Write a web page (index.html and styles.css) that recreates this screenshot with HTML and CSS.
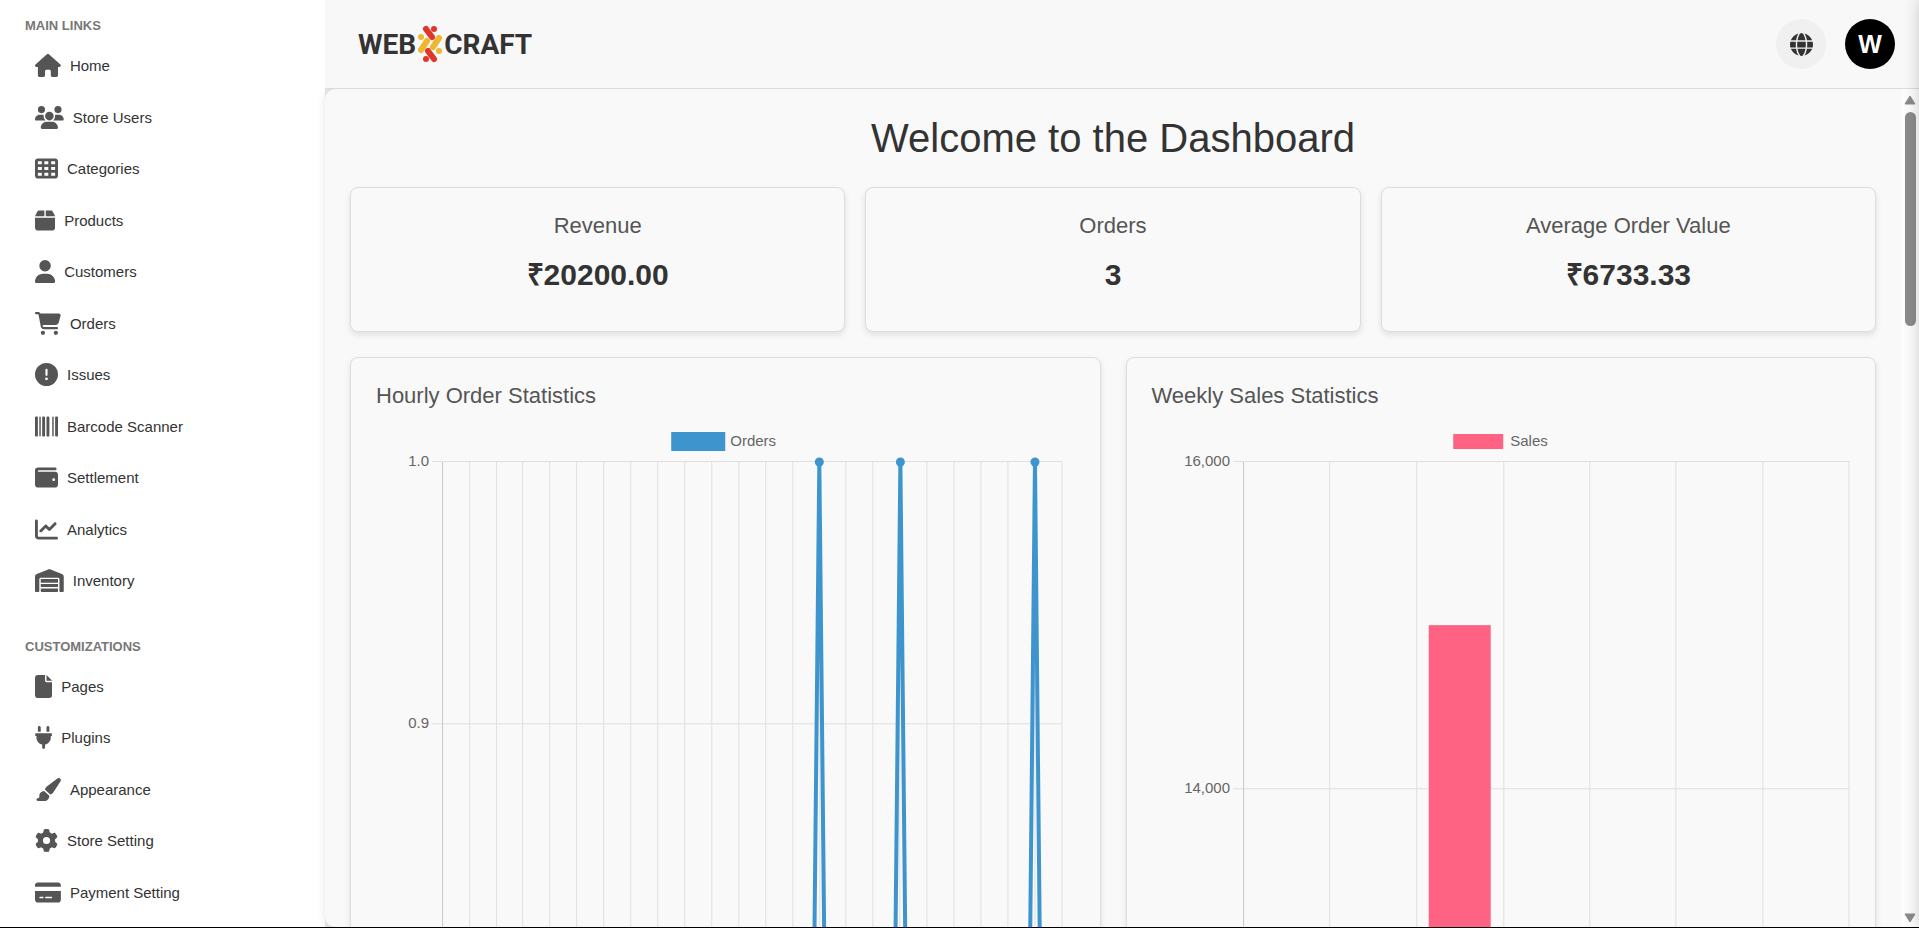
FILE: index.html
```html
<!DOCTYPE html>
<html lang="en">
<head>
<meta charset="utf-8">
<title>WebXCraft Dashboard</title>
<link rel="stylesheet" href="styles.css">
</head>
<body>
<div class="app">
  <aside class="sidebar">
    <nav class="nav-section" aria-labelledby="main-links">
      <h2 class="nav-heading" id="main-links">MAIN LINKS</h2>
      <ul class="nav-list">
        <li><a class="nav-link" href="#"><svg class="icon" viewBox="0 0 576 512"><path d="M575.8 255.5c0 18-15 32.1-32 32.1h-32l.7 160.2c0 2.7-.2 5.4-.5 8.1V472c0 22.1-17.9 40-40 40H456c-1.1 0-2.2 0-3.3-.1c-1.4 .1-2.8 .1-4.2 .1H416 392c-22.1 0-40-17.9-40-40V448 384c0-17.7-14.3-32-32-32H256c-17.7 0-32 14.3-32 32v64 24c0 22.1-17.9 40-40 40H160 128.1c-1.5 0-3-.1-4.5-.2c-1.2 .1-2.4 .2-3.6 .2H104c-22.1 0-40-17.9-40-40V360c0-.9 0-1.9 .1-2.8V287.6H32c-18 0-32-14-32-32.1c0-9 3-17 10-24L266.4 8c7-7 15-8 22-8s15 2 21 7L564.8 231.5c8 7 12 15 11 24z"/></svg>Home</a></li>
        <li><a class="nav-link" href="#"><svg class="icon" viewBox="0 0 640 512"><path d="M144 0a80 80 0 1 1 0 160A80 80 0 1 1 144 0zM512 0a80 80 0 1 1 0 160A80 80 0 1 1 512 0zM0 298.7C0 239.8 47.8 192 106.7 192h42.7c15.9 0 31 3.5 44.6 9.7c-1.3 7.2-1.9 14.7-1.9 22.3c0 38.2 16.8 72.5 43.3 96c-.2 0-.4 0-.7 0H21.3C9.6 320 0 310.4 0 298.7zM405.3 320c-.2 0-.4 0-.7 0c26.6-23.5 43.3-57.8 43.3-96c0-7.6-.7-15-1.9-22.3c13.6-6.3 28.7-9.7 44.6-9.7h42.7C592.2 192 640 239.8 640 298.7c0 11.8-9.6 21.3-21.3 21.3H405.3zM224 224a96 96 0 1 1 192 0 96 96 0 1 1 -192 0zM128 485.3C128 411.7 187.7 352 261.3 352H378.7C452.3 352 512 411.7 512 485.3c0 14.7-11.9 26.7-26.7 26.7H154.7c-14.7 0-26.7-11.9-26.7-26.7z"/></svg>Store Users</a></li>
        <li><a class="nav-link" href="#"><svg class="icon" viewBox="0 0 512 512"><path d="M64 32C28.7 32 0 60.7 0 96V416c0 35.3 28.7 64 64 64H448c35.3 0 64-28.7 64-64V96c0-35.3-28.7-64-64-64H64zm88 64v64H64V96h88zm56 0h88v64H208V96zm240 0v64H360V96h88zM64 224h88v64H64V224zm232 0v64H208V224h88zm64 0h88v64H360V224zM152 352v64H64V352h88zm56 0h88v64H208V352zm240 0v64H360V352h88z"/></svg>Categories</a></li>
        <li><a class="nav-link" href="#"><svg class="icon" viewBox="0 0 448 512"><path d="M50.7 58.5L0 160H208V32H93.7C75.5 32 58.9 42.3 50.7 58.5zM240 160H448L397.3 58.5C389.1 42.3 372.5 32 354.3 32H240V160zm208 32H0V416c0 35.3 28.7 64 64 64H384c35.3 0 64-28.7 64-64V192z"/></svg>Products</a></li>
        <li><a class="nav-link" href="#"><svg class="icon" viewBox="0 0 448 512"><path d="M224 256A128 128 0 1 0 224 0a128 128 0 1 0 0 256zm-45.7 48C79.8 304 0 383.8 0 482.3C0 498.7 13.3 512 29.7 512H418.3c16.4 0 29.7-13.3 29.7-29.7C448 383.8 368.2 304 269.7 304H178.3z"/></svg>Customers</a></li>
        <li><a class="nav-link" href="#"><svg class="icon" viewBox="0 0 576 512"><path d="M0 24C0 10.7 10.7 0 24 0H69.5c22 0 41.5 12.8 50.6 32h411c26.3 0 45.5 25 38.6 50.4l-41 152.3c-8.5 31.4-37 53.3-69.5 53.3H170.7l5.4 28.5c2.2 11.3 12.1 19.5 23.6 19.5H488c13.3 0 24 10.7 24 24s-10.7 24-24 24H199.7c-34.6 0-64.3-24.6-70.7-58.5L77.4 54.5c-.7-3.8-4-6.5-7.9-6.5H24C10.7 48 0 37.3 0 24zM128 464a48 48 0 1 1 96 0 48 48 0 1 1 -96 0zm336-48a48 48 0 1 1 0 96 48 48 0 1 1 0-96z"/></svg>Orders</a></li>
        <li><a class="nav-link" href="#"><svg class="icon" viewBox="0 0 512 512"><path d="M256 512A256 256 0 1 0 256 0a256 256 0 1 0 0 512zm0-384c13.3 0 24 10.7 24 24V264c0 13.3-10.7 24-24 24s-24-10.7-24-24V152c0-13.3 10.7-24 24-24zM224 352a32 32 0 1 1 64 0 32 32 0 1 1 -64 0z"/></svg>Issues</a></li>
        <li><a class="nav-link" href="#"><svg class="icon" viewBox="0 0 512 512"><path d="M24 32C10.7 32 0 42.7 0 56V456c0 13.3 10.7 24 24 24H40c13.3 0 24-10.7 24-24V56c0-13.3-10.7-24-24-24H24zm88 0c-8.8 0-16 7.2-16 16V464c0 8.8 7.2 16 16 16s16-7.2 16-16V48c0-8.8-7.2-16-16-16zm72 0c-13.3 0-24 10.7-24 24V456c0 13.3 10.7 24 24 24h16c13.3 0 24-10.7 24-24V56c0-13.3-10.7-24-24-24H184zm96 0c-13.3 0-24 10.7-24 24V456c0 13.3 10.7 24 24 24h16c13.3 0 24-10.7 24-24V56c0-13.3-10.7-24-24-24H280zM448 56V456c0 13.3 10.7 24 24 24h16c13.3 0 24-10.7 24-24V56c0-13.3-10.7-24-24-24H472c-13.3 0-24 10.7-24 24zm-64-8V464c0 8.8 7.2 16 16 16s16-7.2 16-16V48c0-8.8-7.2-16-16-16s-16 7.2-16 16z"/></svg>Barcode Scanner</a></li>
        <li><a class="nav-link" href="#"><svg class="icon" viewBox="0 0 512 512"><path d="M64 32C28.7 32 0 60.7 0 96V416c0 35.3 28.7 64 64 64H448c35.3 0 64-28.7 64-64V192c0-35.3-28.7-64-64-64H80c-8.8 0-16-7.2-16-16s7.2-16 16-16H448c17.7 0 32-14.3 32-32s-14.3-32-32-32H64zM416 272a32 32 0 1 1 0 64 32 32 0 1 1 0-64z"/></svg>Settlement</a></li>
        <li><a class="nav-link" href="#"><svg class="icon" viewBox="0 0 512 512"><path d="M64 64c0-17.7-14.3-32-32-32S0 46.3 0 64V400c0 44.2 35.8 80 80 80H480c17.7 0 32-14.3 32-32s-14.3-32-32-32H80c-8.8 0-16-7.2-16-16V64zm406.6 86.6c12.5-12.5 12.5-32.8 0-45.3s-32.8-12.5-45.3 0L320 210.7l-57.4-57.4c-12.5-12.5-32.8-12.5-45.3 0l-112 112c-12.5 12.5-12.5 32.8 0 45.3s32.8 12.5 45.3 0L240 221.3l57.4 57.4c12.5 12.5 32.8 12.5 45.3 0l128-128z"/></svg>Analytics</a></li>
        <li><a class="nav-link" href="#"><svg class="icon" viewBox="0 0 640 512"><path d="M0 488V171.3c0-26.2 15.9-49.7 40.2-59.4L308.1 4.8c7.6-3.1 16.1-3.1 23.8 0L599.8 111.9c24.3 9.7 40.2 33.3 40.2 59.4V488c0 13.3-10.7 24-24 24H568c-13.3 0-24-10.7-24-24V224c0-17.7-14.3-32-32-32H128c-17.7 0-32 14.3-32 32V488c0 13.3-10.7 24-24 24H24c-13.3 0-24-10.7-24-24zm488 24l-336 0c-13.3 0-24-10.7-24-24V432H512l0 56c0 13.3-10.7 24-24 24zM128 400V336H512v64H128zm0-96V224H512l0 80H128z"/></svg>Inventory</a></li>
      </ul>
    </nav>
    <nav class="nav-section" aria-labelledby="customizations">
      <h2 class="nav-heading" id="customizations">CUSTOMIZATIONS</h2>
      <ul class="nav-list">
        <li><a class="nav-link" href="#"><svg class="icon" viewBox="0 0 384 512"><path d="M0 64C0 28.7 28.7 0 64 0H224V128c0 17.7 14.3 32 32 32H384V448c0 35.3-28.7 64-64 64H64c-35.3 0-64-28.7-64-64V64zm384 64H256V0L384 128z"/></svg>Pages</a></li>
        <li><a class="nav-link" href="#"><svg class="icon" viewBox="0 0 384 512"><path d="M96 0C78.3 0 64 14.3 64 32v96h64V32c0-17.7-14.3-32-32-32zM288 0c-17.7 0-32 14.3-32 32v96h64V32c0-17.7-14.3-32-32-32zM32 160c-17.7 0-32 14.3-32 32s14.3 32 32 32v32c0 77.4 55 142 128 156.8V480c0 17.7 14.3 32 32 32s32-14.3 32-32V412.8C297 398 352 333.4 352 256V224c17.7 0 32-14.3 32-32s-14.3-32-32-32H32z"/></svg>Plugins</a></li>
        <li><a class="nav-link" href="#"><svg class="icon" viewBox="0 0 576 512"><path d="M339.3 367.1c27.3-3.9 51.9-19.4 67.2-42.9L568.2 74.1c12.6-19.5 9.4-45.3-7.6-61.2S517.7-4.4 499.1 9.6L262.4 187.2c-24 18-38.2 46.1-38.4 76.1L339.3 367.1zm-19.6 25.4l-116-104.4C143.9 290.3 96 339.6 96 400c0 3.9 .2 7.8 .6 11.6C98.4 429.1 86.4 448 68.8 448H64c-17.7 0-32 14.3-32 32s14.3 32 32 32H208c61.9 0 112-50.1 112-112c0-2.5-.1-5-.2-7.5z"/></svg>Appearance</a></li>
        <li><a class="nav-link" href="#"><svg class="icon" viewBox="0 0 512 512"><path d="M495.9 166.6c3.2 8.7 .5 18.4-6.4 24.6l-43.3 39.4c1.1 8.3 1.7 16.8 1.7 25.4s-.6 17.1-1.7 25.4l43.3 39.4c6.9 6.2 9.6 15.9 6.4 24.6c-4.4 11.9-9.7 23.3-15.8 34.3l-4.7 8.1c-6.6 11-14 21.4-22.1 31.2c-5.9 7.2-15.7 9.6-24.5 6.8l-55.7-17.7c-13.4 10.3-28.2 18.9-44 25.4l-12.5 57.1c-2 9.1-9 16.3-18.2 17.8c-13.8 2.3-28 3.5-42.5 3.5s-28.7-1.2-42.5-3.5c-9.2-1.5-16.2-8.7-18.2-17.8l-12.5-57.1c-15.8-6.5-30.6-15.1-44-25.4L83.1 425.9c-8.8 2.8-18.6 .3-24.5-6.8c-8.1-9.8-15.5-20.2-22.1-31.2l-4.7-8.1c-6.1-11-11.4-22.4-15.8-34.3c-3.2-8.7-.5-18.4 6.4-24.6l43.3-39.4C64.6 273.1 64 264.6 64 256s.6-17.1 1.7-25.4L22.4 191.2c-6.9-6.2-9.6-15.9-6.4-24.6c4.4-11.9 9.7-23.3 15.8-34.3l4.7-8.1c6.6-11 14-21.4 22.1-31.2c5.9-7.2 15.7-9.6 24.5-6.8l55.7 17.7c13.4-10.3 28.2-18.9 44-25.4l12.5-57.1c2-9.1 9-16.3 18.2-17.8C227.3 1.2 241.5 0 256 0s28.7 1.2 42.5 3.5c9.2 1.5 16.2 8.7 18.2 17.8l12.5 57.1c15.8 6.5 30.6 15.1 44 25.4l55.7-17.7c8.8-2.8 18.6-.3 24.5 6.8c8.1 9.8 15.5 20.2 22.1 31.2l4.7 8.1c6.1 11 11.4 22.4 15.8 34.3zM256 336a80 80 0 1 0 0-160 80 80 0 1 0 0 160z"/></svg>Store Setting</a></li>
        <li><a class="nav-link" href="#"><svg class="icon" viewBox="0 0 576 512"><path d="M64 32C28.7 32 0 60.7 0 96v32H576V96c0-35.3-28.7-64-64-64H64zM576 224H0V416c0 35.3 28.7 64 64 64H512c35.3 0 64-28.7 64-64V224zM112 352h64c8.8 0 16 7.2 16 16s-7.2 16-16 16H112c-8.8 0-16-7.2-16-16s7.2-16 16-16zm112 16c0-8.8 7.2-16 16-16H368c8.8 0 16 7.2 16 16s-7.2 16-16 16H240c-8.8 0-16-7.2-16-16z"/></svg>Payment Setting</a></li>
      </ul>
    </nav>
  </aside>

  <div class="page">
    <header class="topbar">
      <a class="logo" href="#" aria-label="WEB X CRAFT">
        <span>WEB</span>
        <svg class="logo-mark" viewBox="0 0 24 38">
          <g stroke-width="6" stroke-linecap="round">
            <path stroke="#e0352b" d="M8 4l6 8M10 26l6 8"/>
            <path stroke="#efb62f" d="M9 16l-6 9M21 13l-6 9"/>
          </g>
          <g fill="#e0352b"><circle cx="16" cy="4" r="3"/><circle cx="8" cy="34" r="3"/></g>
          <g fill="#efb62f"><circle cx="3" cy="12" r="3"/><circle cx="21" cy="26" r="3"/></g>
        </svg>
        <span>CRAFT</span>
      </a>
      <div class="actions">
        <button class="round-button" type="button" aria-label="Visit site"><svg class="globe" viewBox="0 0 512 512"><path d="M352 256c0 22.2-1.2 43.6-3.3 64H163.3c-2.2-20.4-3.3-41.8-3.3-64s1.2-43.6 3.3-64H348.7c2.2 20.4 3.3 41.8 3.3 64zm28.8-64H503.9c5.3 20.5 8.1 41.9 8.1 64s-2.8 43.5-8.1 64H380.8c2.1-20.6 3.2-42 3.2-64s-1.1-43.4-3.2-64zm112.6-32H376.7c-10-63.9-29.8-117.4-55.3-151.6c78.3 20.7 142 77.5 171.9 151.6zm-149.1 0H167.7c6.1-36.4 15.5-68.6 27-94.7c10.5-23.6 22.2-40.7 33.5-51.5C239.4 3.2 248.7 0 256 0s16.6 3.2 27.8 13.8c11.3 10.8 23 27.9 33.5 51.5c11.6 26 20.9 58.2 27 94.7zm-209 0H18.6C48.6 85.9 112.2 29.1 190.6 8.4C165.1 42.6 145.3 96.1 135.3 160zM8.1 192H131.2c-2.1 20.6-3.2 42-3.2 64s1.1 43.4 3.2 64H8.1C2.8 299.5 0 278.1 0 256s2.8-43.5 8.1-64zM194.7 446.6c-11.6-26-20.9-58.2-27-94.6H344.3c-6.1 36.4-15.5 68.6-27 94.6c-10.5 23.6-22.2 40.7-33.5 51.5C272.6 508.8 263.3 512 256 512s-16.6-3.2-27.8-13.8c-11.3-10.8-23-27.9-33.5-51.5zM135.3 352c10 63.9 29.8 117.4 55.3 151.6C112.2 482.9 48.6 426.1 18.6 352H135.3zm358.1 0c-30 74.1-93.6 130.9-171.9 151.6c25.5-34.2 45.2-87.7 55.3-151.6H493.4z"/></svg></button>
        <button class="round-button avatar" type="button">W</button>
      </div>
    </header>

    <div class="viewport">
      <main class="content">
        <h1 class="title">Welcome to the Dashboard</h1>
        <div class="stats">
          <section class="card stat"><h2 class="card-title">Revenue</h2><p class="stat-value">₹20200.00</p></section>
          <section class="card stat"><h2 class="card-title">Orders</h2><p class="stat-value">3</p></section>
          <section class="card stat"><h2 class="card-title">Average Order Value</h2><p class="stat-value">₹6733.33</p></section>
        </div>
        <div class="charts">
          <section class="card">
            <h2 class="card-title chart-title">Hourly Order Statistics</h2>
            <svg class="chart" viewBox="0 0 698 2700" role="img" aria-label="Orders per hour">
              <rect class="orders-fill" x="295" y="8" width="54" height="19"/>
              <text class="chart-text" x="354" y="22">Orders</text>
              <path class="grid-line" d="M56 37.5H686M56 299.5H686M56 561.5H686M56 823.5H686M56 1085.5H686M56 1347.5H686M56 1609.5H686M56 1871.5H686M56 2133.5H686M56 2395.5H686M56 2657.5H686"/>
              <path class="grid-line" d="M93.5 38V2657M120.5 38V2657M146.5 38V2657M173.5 38V2657M200.5 38V2657M227.5 38V2657M254.5 38V2657M281.5 38V2657M308.5 38V2657M335.5 38V2657M362.5 38V2657M389.5 38V2657M416.5 38V2657M443.5 38V2657M469.5 38V2657M496.5 38V2657M523.5 38V2657M550.5 38V2657M577.5 38V2657M604.5 38V2657M631.5 38V2657M658.5 38V2657M685.5 38V2657"/>
              <path class="axis-line" d="M66.5 38V2657"/>
              <text class="chart-text tick" x="53" y="42">1.0</text>
              <text class="chart-text tick" x="53" y="304">0.9</text>
              <path class="orders-line" d="M66 2657H416L443 38L470 2657H497L524 38L551 2657H632L658.5 38L685 2657"/>
              <g class="orders-fill"><circle cx="443" cy="38" r="4.5"/><circle cx="524" cy="38" r="4.5"/><circle cx="658.5" cy="38" r="4.5"/></g>
            </svg>
          </section>
          <section class="card">
            <h2 class="card-title chart-title">Weekly Sales Statistics</h2>
            <svg class="chart" viewBox="0 0 698 2700" role="img" aria-label="Sales per weekday">
              <rect class="sales-fill" x="301" y="10" width="50" height="15"/>
              <text class="chart-text" x="358" y="22">Sales</text>
              <path class="grid-line" d="M81 37.5H697M81 364.5H697M81 691.5H697M81 1018.5H697M81 1345.5H697M81 1672.5H697M81 1999.5H697M81 2326.5H697M81 2653.5H697"/>
              <path class="grid-line" d="M177.5 38V2653M264.5 38V2653M351.5 38V2653M437.5 38V2653M523.5 38V2653M610.5 38V2653M696.5 38V2653"/>
              <path class="axis-line" d="M91.5 38V2653"/>
              <text class="chart-text tick" x="78" y="42">16,000</text>
              <text class="chart-text tick" x="78" y="369">14,000</text>
              <rect class="sales-fill" x="276.5" y="201" width="62" height="2452"/>
            </svg>
          </section>
        </div>
      </main>
      <div class="scrollbar" aria-hidden="true">
        <svg class="arrow" viewBox="0 0 12 10"><path d="M6 1L11 9H1z"/></svg>
        <div class="track"><div class="thumb"></div></div>
        <svg class="arrow" viewBox="0 0 12 10"><path d="M6 9L1 1H11z"/></svg>
      </div>
    </div>
  </div>
</div>
</body>
</html>
```
FILE: styles.css
```css
* {
  box-sizing: border-box;
}

body {
  margin: 0;
  overflow: hidden;
  background: #fff;
  color: #333;
  font-family: Arial, "Liberation Sans", sans-serif;
  font-size: 15px;
}

/* Edge shadow of the closed side panel */
body::after {
  content: "";
  position: fixed;
  z-index: 2;
  inset: 0 -20px 0 auto;
  width: 20px;
  box-shadow: 0 0 16px rgba(0, 0, 0, 0.2);
}

h1, h2, p, ul {
  margin: 0;
  padding: 0;
}

.app {
  display: flex;
  height: 100vh;
  border-bottom: 1px solid #000;
}

.sidebar {
  flex: none;
  width: 325px;
  padding: 17px 25px 0;
  overflow: hidden;
  background: #fff;
}

.nav-section {
  margin-bottom: 34px;
}

.nav-heading {
  margin-bottom: 8px;
  color: #777;
  font-size: 13px;
  line-height: 18px;
}

.nav-list {
  display: grid;
  gap: 6px;
  list-style: none;
}

.nav-link {
  display: flex;
  align-items: center;
  gap: 9px;
  padding: 10px;
  color: #333;
  line-height: 1.7;
  text-decoration: none;
}

.icon {
  height: 23px;
  fill: #555;
}

.page {
  display: flex;
  flex: 1;
  flex-direction: column;
  min-width: 0;
  background: #e8e8e8;
}

.topbar {
  position: relative;
  z-index: 1;
  display: flex;
  align-items: center;
  justify-content: space-between;
  padding: 19px 24px 19px 33px;
  border-bottom: 1px solid #dcdcdc;
  background: #f8f8f8;
}

.logo {
  display: flex;
  align-items: center;
  gap: 2px;
  color: #333;
  font-family: Roboto, "Liberation Sans", sans-serif;
  font-size: 28px;
  font-weight: 700;
  text-decoration: none;
}

.logo-mark {
  height: 38px;
  fill: none;
}

.actions {
  display: flex;
  gap: 19px;
}

.round-button {
  display: flex;
  align-items: center;
  justify-content: center;
  width: 50px;
  height: 50px;
  padding: 0;
  border: 0;
  border-radius: 50%;
  background: #f0f0f0;
}

.globe {
  height: 23px;
  fill: #333;
}

.avatar {
  background: #000;
  color: #fff;
  font-family: Arial, "Liberation Sans", sans-serif;
  font-size: 25px;
  font-weight: 700;
}

.viewport {
  display: flex;
  flex: 1;
  min-height: 0;
  border-radius: 10px 0 0 10px;
  background: #f9f9f9;
  box-shadow: 0 0 10px rgba(0, 0, 0, 0.1);
}

.content {
  flex: 1;
  min-width: 0;
  padding: 25px;
  overflow-y: auto;
  scrollbar-width: none;
}

.title {
  margin-bottom: 25px;
  font-size: 40px;
  font-weight: 400;
  line-height: 48px;
  text-align: center;
}

.stats {
  display: grid;
  grid-template-columns: repeat(3, 1fr);
  gap: 20px;
  margin-bottom: 25px;
}

.charts {
  display: grid;
  grid-template-columns: repeat(2, 1fr);
  gap: 25px;
}

.card {
  padding: 25px;
  border: 1px solid #ddd;
  border-radius: 8px;
  background: #f9f9f9;
  box-shadow: 0 3px 6px rgba(0, 0, 0, 0.1);
}

.stat {
  text-align: center;
}

.card-title {
  margin-bottom: 13px;
  color: #555;
  font-size: 22px;
  font-weight: 400;
  line-height: 26px;
}

.chart-title {
  margin-bottom: 15px;
}

.stat-value {
  margin-bottom: 9px;
  font-size: 30px;
  font-weight: 700;
  line-height: 45px;
}

.chart {
  display: block;
  width: 100%;
}

.chart-text {
  fill: #666;
  font-size: 15px;
}

.tick {
  text-anchor: end;
}

.grid-line {
  fill: none;
  stroke: #e0e0e0;
}

.axis-line {
  stroke: #c9c9c9;
}

.orders-fill {
  fill: #3e95cd;
}

.orders-line {
  fill: none;
  stroke: #3e95cd;
  stroke-width: 4;
  stroke-linejoin: bevel;
}

.sales-fill {
  fill: #ff6384;
}

.scrollbar {
  display: flex;
  flex: none;
  flex-direction: column;
  align-items: center;
  width: 18px;
  padding: 6px 0 4px;
  background: #fcfcfc;
}

.arrow {
  width: 12px;
  height: 10px;
  fill: #8b8b8b;
  stroke: #8b8b8b;
  stroke-linejoin: round;
}

.track {
  flex: 1;
  padding: 7px 0;
}

.thumb {
  width: 11px;
  height: 27%;
  border-radius: 6px;
  background: #8b8b8b;
}
```
